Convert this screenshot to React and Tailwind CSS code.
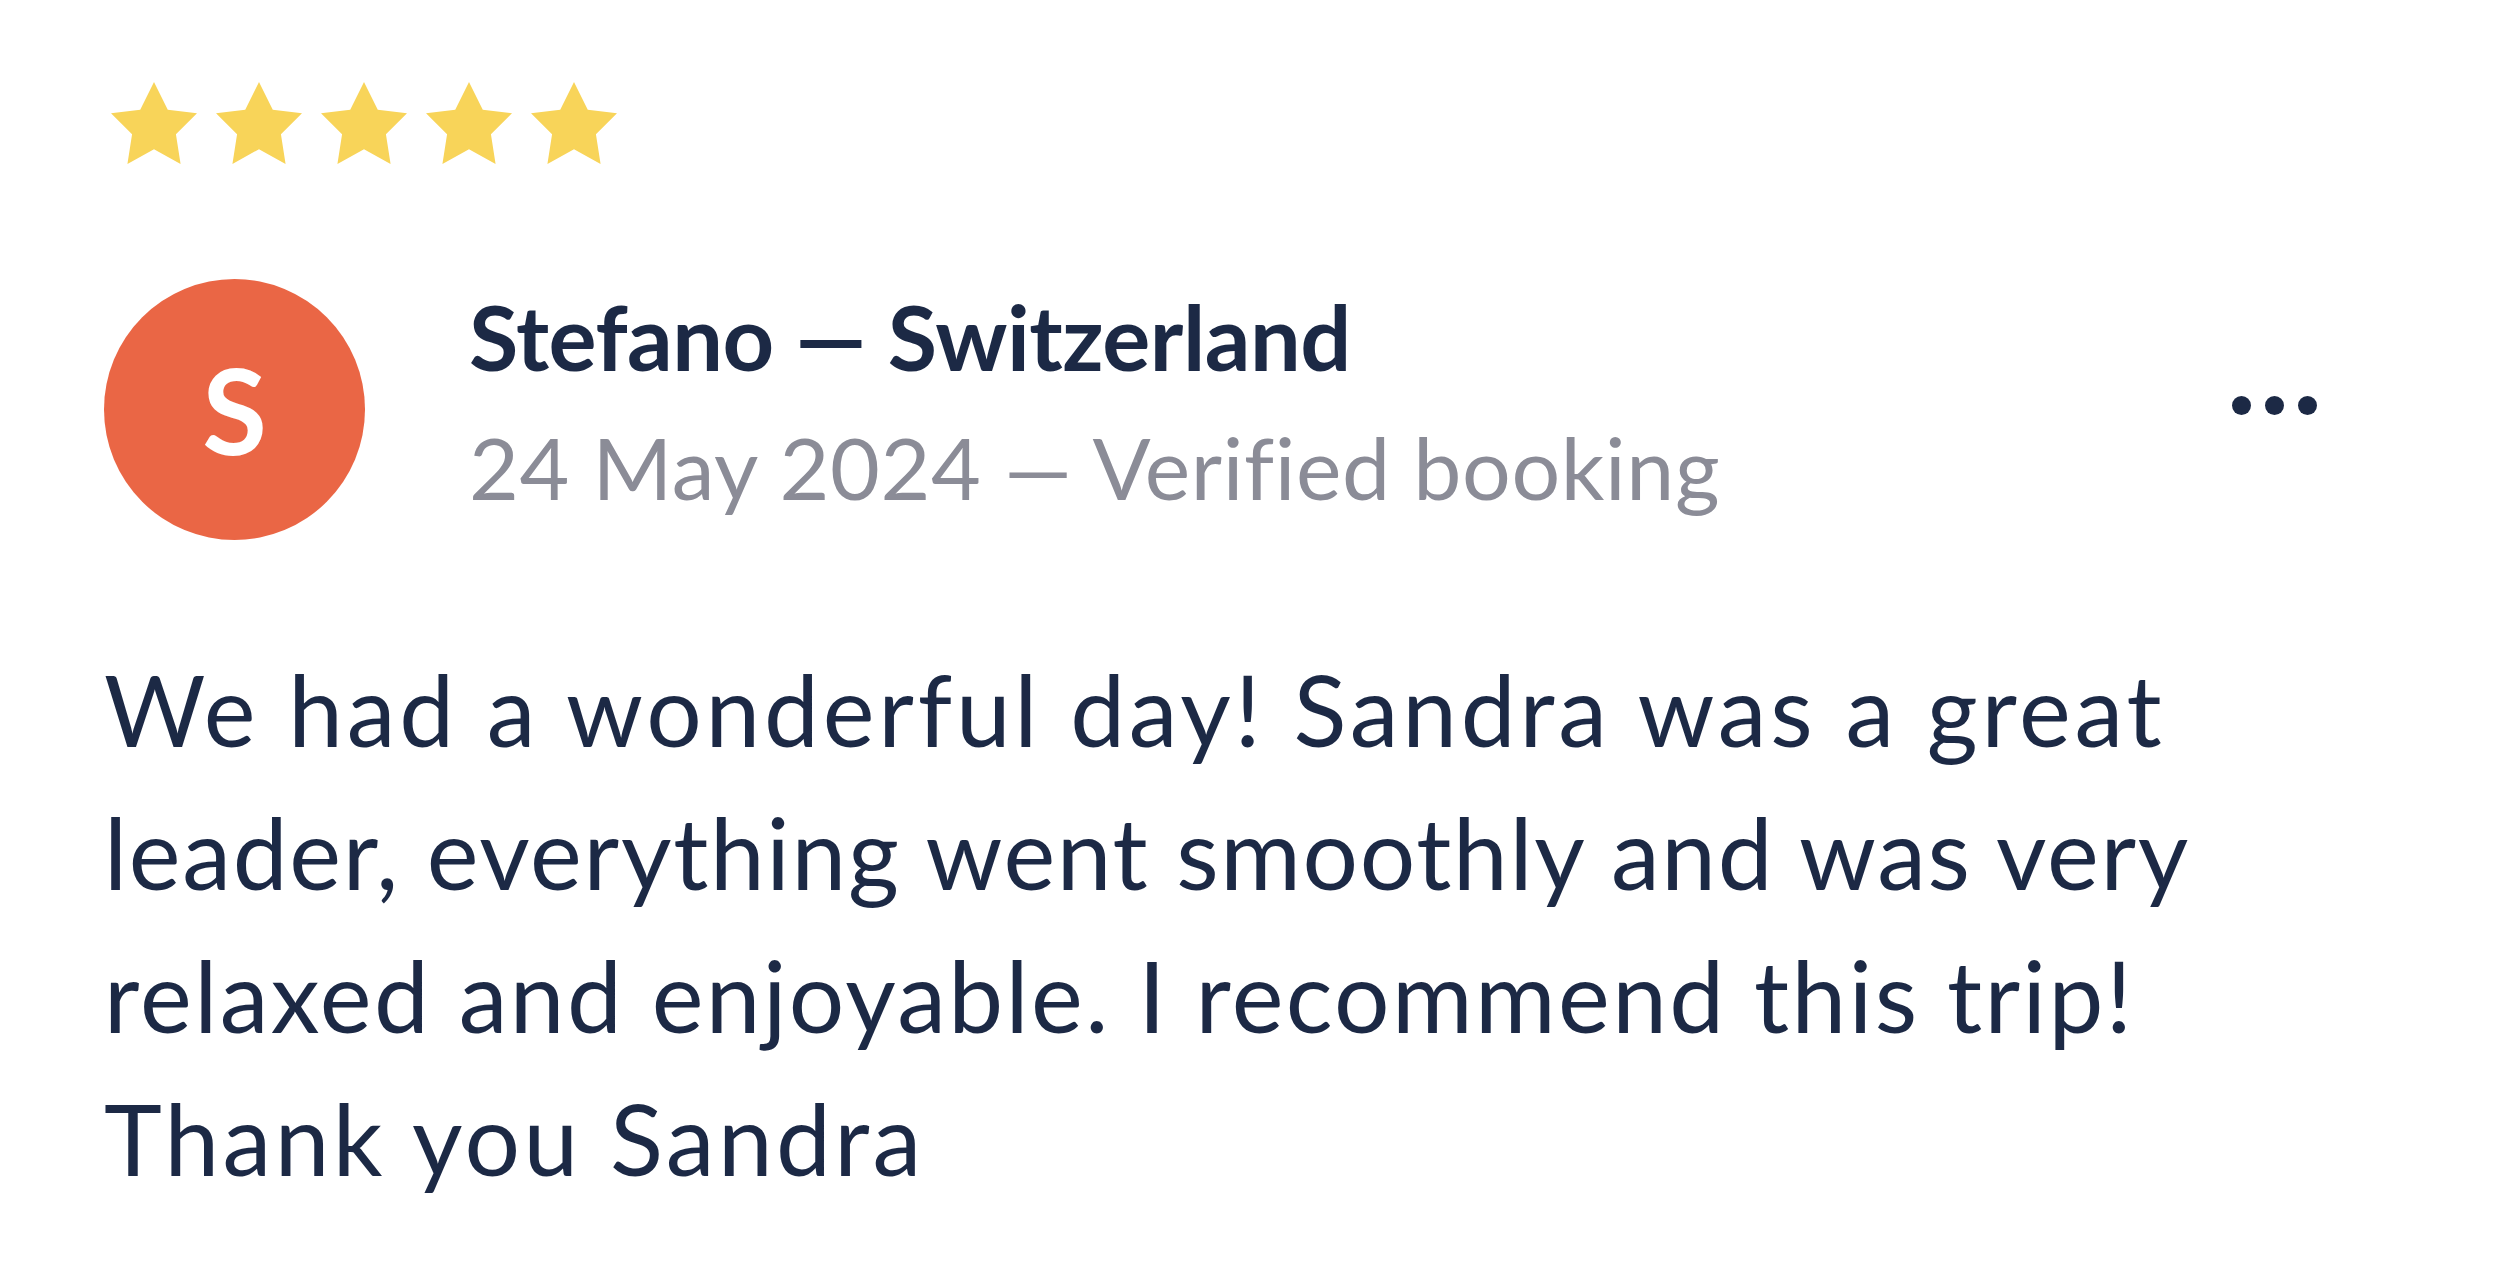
import React from 'react';

const Star = () => (
  <svg width="86" height="82" viewBox="2 2 20 19.02" className="shrink-0">
    <polygon
      points="12,2 15.2,8.4 22,9.27 17.1,14.1 18.18,21.02 12,17.6 5.82,21.02 6.9,14.1 2,9.27 8.8,8.4"
      fill="#F8D459"
    />
  </svg>
);

const ReviewCard = () => {
  const review = {
    initial: 'S',
    name: 'Stefano — Switzerland',
    meta: '24 May 2024 — Verified booking',
  };

  return (
    <div
      className="min-h-screen bg-white pl-[104px] pr-[183px] pt-[82px] text-[#1c2945]"
      style={{ fontFamily: 'Lato, "Noto Sans", sans-serif' }}
    >
      {/* Rating */}
      <div className="flex gap-[19px] pl-[7px]">
        {Array.from({ length: 5 }, (_, i) => (
          <Star key={i} />
        ))}
      </div>

      {/* Author row */}
      <div className="mt-[115px] flex items-start">
        <div className="flex h-[261px] w-[261px] shrink-0 items-center justify-center rounded-full bg-[#EA6645]">
          <span className="text-[118px] font-bold leading-none text-white">{review.initial}</span>
        </div>
        <div className="ml-[104px] mt-[3px] flex flex-col gap-[25px]">
          <div className="text-[90px] font-bold leading-[1.2] tracking-[-0.5px]">{review.name}</div>
          <div className="text-[86px] leading-[1.2] tracking-[0.6px] text-[#8b8c97]">{review.meta}</div>
        </div>
        <div className="mb-[8px] ml-auto flex gap-[14px] self-center">
          <span className="h-[19px] w-[19px] rounded-full bg-[#1c2945]" />
          <span className="h-[19px] w-[19px] rounded-full bg-[#1c2945]" />
          <span className="h-[19px] w-[19px] rounded-full bg-[#1c2945]" />
        </div>
      </div>

      {/* Body */}
      <p className="mt-[98px] text-[98px] leading-[143px]">
        <span className="block tracking-[3.8px]">We had a wonderful day! Sandra was a great</span>
        <span className="block tracking-[1.7px]">leader, everything went smoothly and was very</span>
        <span className="block tracking-[2.4px]">relaxed and enjoyable. I recommend this trip!</span>
        <span className="block tracking-[3.4px]">Thank you Sandra</span>
      </p>
    </div>
  );
};

export default ReviewCard;
